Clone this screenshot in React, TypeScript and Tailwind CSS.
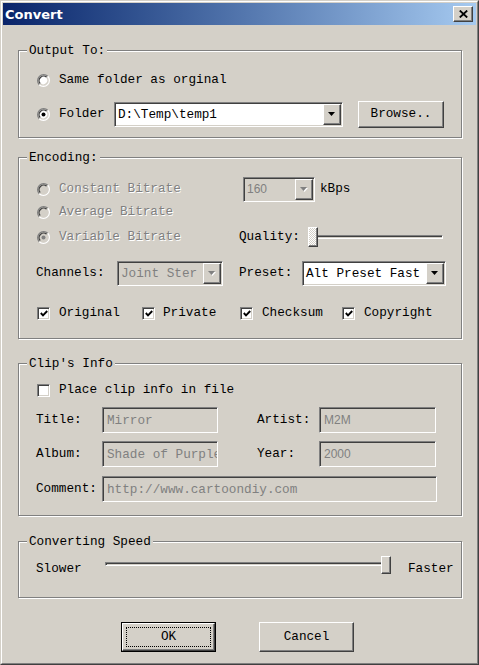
import React from "react";

const face = "bg-[#D4D0C8]";
const raised =
  "border border-t-white border-l-white border-r-[#404040] border-b-[#404040] shadow-[inset_-1px_-1px_0_#808080]";
const sunken =
  "border border-t-[#808080] border-l-[#808080] border-r-white border-b-white shadow-[inset_1px_1px_0_#404040,inset_-1px_-1px_0_#D4D0C8]";
const dim = "text-[#808080] [text-shadow:1px_1px_0_#fff]";

const Radio = ({ checked, disabled }: { checked?: boolean; disabled?: boolean }) => (
  <svg width="13" height="13" viewBox="0 0 13 13" className="shrink-0">
    <circle cx="6.5" cy="6.5" r="5" fill={disabled ? "#D4D0C8" : "#ffffff"} />
    <path d="M2.26 10.74A6 6 0 0 1 10.74 2.26" stroke="#808080" strokeWidth="1.3" fill="none" />
    <path d="M10.74 2.26A6 6 0 0 1 2.26 10.74" stroke="#ffffff" strokeWidth="1.3" fill="none" />
    <path d="M3.32 9.68A4.5 4.5 0 0 1 9.68 3.32" stroke="#404040" strokeWidth="1.3" fill="none" />
    <path d="M9.68 3.32A4.5 4.5 0 0 1 3.32 9.68" stroke="#D4D0C8" strokeWidth="1.3" fill="none" />
    {checked && <circle cx="6.5" cy="6.5" r="2" fill={disabled ? "#808080" : "#000000"} />}
  </svg>
);

const Check = ({ checked }: { checked?: boolean }) => (
  <span className={`w-[13px] h-[13px] shrink-0 bg-white ${sunken} flex items-center justify-center`}>
    {checked && (
      <svg width="8" height="7" viewBox="0 0 8 7">
        <path d="M0.8 3 L3 5.3 L7.2 1" stroke="#000" strokeWidth="1.9" fill="none" />
      </svg>
    )}
  </span>
);

const Arrow = ({ disabled }: { disabled?: boolean }) => (
  <span className={`w-[18px] h-full shrink-0 ${raised} ${face} flex items-center justify-center`}>
    <svg width="8" height="5" viewBox="0 0 8 5">
      {disabled && <path d="M1 1 H8 L4.5 5 Z" fill="#ffffff" />}
      <path d="M0 0 H7 L3.5 4 Z" fill={disabled ? "#808080" : "#000000"} />
    </svg>
  </span>
);

const Combo = ({
  size,
  value,
  disabled,
  sans,
}: {
  size: string;
  value: string;
  disabled?: boolean;
  sans?: boolean;
}) => (
  <div className={`${size} ${sunken} ${disabled ? face : "bg-white"} p-px flex items-center shrink-0`}>
    <span
      className={`flex-1 pl-[2px] leading-[17px] whitespace-nowrap overflow-hidden ${
        disabled ? "text-[#808080]" : ""
      } ${sans ? "font-['Liberation_Sans',sans-serif] text-[12px]" : ""}`}
    >
      {value}
    </span>
    <Arrow disabled={disabled} />
  </div>
);

const Field = ({ size, value, sans }: { size: string; value: string; sans?: boolean }) => (
  <div className={`${size} ${sunken} ${face} flex items-center pl-[4px] overflow-hidden shrink-0`}>
    <span
      className={`whitespace-nowrap leading-[17px] text-[#808080] ${
        sans ? "font-['Liberation_Sans',sans-serif] text-[12px]" : ""
      }`}
    >
      {value}
    </span>
  </div>
);

const Group = ({ label, className, children }: { label: string; className: string; children: React.ReactNode }) => (
  <div className={`relative border border-[#808080] shadow-[inset_1px_1px_0_#fff,1px_1px_0_#fff] ${className}`}>
    <span className={`absolute left-[8px] -top-[8px] px-[2px] ${face} leading-[15px]`}>{label}</span>
    {children}
  </div>
);

const Slider = ({ size, track, thumb, dotted }: { size: string; track: string; thumb: string; dotted?: boolean }) => (
  <div className={`relative ${size} shrink-0`}>
    <div
      className={`absolute ${track} h-[4px] border border-t-[#808080] border-l-[#808080] border-r-white border-b-white shadow-[inset_1px_1px_0_#404040]`}
    />
    <div
      className={`absolute ${thumb} ${raised} ${
        dotted
          ? "bg-[repeating-conic-gradient(#D4D0C8_0%_25%,#ffffff_0%_50%)] [background-size:2px_2px]"
          : face
      }`}
    />
  </div>
);

export default function App() {
  return (
    <div className="w-[479px] h-[665px] border border-t-[#D4D0C8] border-l-[#D4D0C8] border-r-[#404040] border-b-[#404040] bg-[#D4D0C8] font-['Liberation_Mono',monospace] text-[12.7px] text-black leading-none">
      <div className="h-full border border-t-white border-l-white border-r-[#808080] border-b-[#808080] p-px flex flex-col">
        <div className="h-[22px] flex items-center justify-between pl-[2px] pr-[3px] bg-linear-to-r from-[#0A246A] to-[#A6CAF0]">
          <span className="font-['DejaVu_Sans',sans-serif] font-bold text-[13px] text-white">Convert</span>
          <span className={`w-[20px] h-[16px] ${raised} ${face} flex items-center justify-center`}>
            <svg width="9" height="8" viewBox="0 0 9 8">
              <path d="M0.8 0.5 L8.2 7.5 M8.2 0.5 L0.8 7.5" stroke="#000" strokeWidth="1.8" fill="none" />
            </svg>
          </span>
        </div>

        <div className="pl-[15px] pr-[14px] flex flex-col">
          <Group label="Output To:" className="mt-[25px] h-[88px] pl-[18px] pt-[19px]">
            <div className="flex items-center h-[20px]">
              <Radio />
              <span className="ml-[9px]">Same folder as orginal</span>
            </div>
            <div className="flex items-center h-[27px] mt-[11px]">
              <Radio checked />
              <span className="ml-[9px] w-[55px]">Folder</span>
              <Combo size="w-[229px] h-[25px]" value="D:\Temp\temp1" />
              <button className={`ml-[15px] w-[86px] h-[27px] ${raised} ${face} flex items-center justify-center`}>
                Browse..
              </button>
            </div>
          </Group>

          <Group label="Encoding:" className="mt-[19px] h-[182px] pl-[18px] pt-[18px]">
            <div className="flex items-center h-[26px]">
              <div className="w-[202px] flex items-center">
                <Radio disabled />
                <span className={`ml-[9px] ${dim}`}>Constant Bitrate</span>
              </div>
              <div className="ml-[4px]">
                <Combo size="w-[72px] h-[25px]" value="160" disabled sans />
              </div>
              <span className="ml-[5px]">kBps</span>
            </div>
            <div className="flex items-center h-[20px]">
              <Radio disabled />
              <span className={`ml-[9px] ${dim}`}>Average Bitrate</span>
            </div>
            <div className="flex items-center h-[20px] mt-[5px]">
              <div className="w-[202px] flex items-center">
                <Radio checked disabled />
                <span className={`ml-[9px] ${dim}`}>Variable Bitrate</span>
              </div>
              <span className="w-[69px]">Quality:</span>
              <Slider
                size="w-[135px] h-[20px]"
                track="left-[4px] right-0 top-[8px]"
                thumb="left-0 top-0 w-[10px] h-[20px]"
                dotted
              />
            </div>
            <div className="flex items-center h-[27px] mt-[13px]">
              <div className="w-[202px] flex items-center">
                <span className="w-[81px] -ml-px">Channels:</span>
                <Combo size="w-[106px] h-[25px]" value="Joint Ster" disabled />
              </div>
              <span className="w-[63px]">Preset:</span>
              <Combo size="w-[144px] h-[25px]" value="Alt Preset Fast" />
            </div>
            <div className="flex items-center h-[14px] mt-[19px]">
              <div className="w-[105px] flex items-center">
                <Check checked />
                <span className="ml-[9px]">Original</span>
              </div>
              <div className="w-[98px] flex items-center">
                <Check checked />
                <span className="ml-[8px]">Private</span>
              </div>
              <div className="w-[102px] flex items-center">
                <Check checked />
                <span className="ml-[9px]">Checksum</span>
              </div>
              <div className="flex items-center">
                <Check checked />
                <span className="ml-[9px]">Copyright</span>
              </div>
            </div>
          </Group>

          <Group label="Clip's Info" className="mt-[24px] h-[153px] pl-[18px] pt-[19px]">
            <div className="flex items-center h-[14px]">
              <Check />
              <span className="ml-[9px]">Place clip info in file</span>
            </div>
            <div className="flex items-center h-[26px] mt-[10px]">
              <span className="w-[66px] -ml-px">Title:</span>
              <Field size="w-[116px] h-[26px]" value="Mirror" />
              <span className="ml-[39px] w-[62px]">Artist:</span>
              <Field size="w-[117px] h-[26px]" value="M2M" sans />
            </div>
            <div className="flex items-center h-[26px] mt-[8px]">
              <span className="w-[66px] -ml-px">Album:</span>
              <Field size="w-[116px] h-[26px]" value="Shade of Purple" />
              <span className="ml-[39px] w-[62px]">Year:</span>
              <Field size="w-[117px] h-[26px]" value="2000" sans />
            </div>
            <div className="flex items-center h-[26px] mt-[9px]">
              <span className="w-[66px] -ml-px">Comment:</span>
              <Field size="w-[335px] h-[26px]" value="http://www.cartoondiy.com" />
            </div>
          </Group>

          <Group label="Converting Speed" className="mt-[25px] h-[57px] pl-[18px] pt-[14px]">
            <div className="flex items-center h-[26px]">
              <span className="w-[69px] -ml-px">Slower</span>
              <Slider
                size="w-[286px] h-[26px]"
                track="left-0 right-[4px] top-[6px]"
                thumb="left-[276px] top-0 w-[10px] h-[18px]"
              />
              <span className="ml-[17px]">Faster</span>
            </div>
          </Group>

          <div className="flex mt-[24px] pl-[103px]">
            <div className="w-[95px] h-[30px] border border-black">
              <div className={`h-full ${raised} ${face} p-[3px]`}>
                <div className="h-full border border-dotted border-black flex items-center justify-center">OK</div>
              </div>
            </div>
            <button className={`ml-[43px] w-[95px] h-[30px] ${raised} ${face} flex items-center justify-center`}>
              Cancel
            </button>
          </div>
        </div>
      </div>
    </div>
  );
}
